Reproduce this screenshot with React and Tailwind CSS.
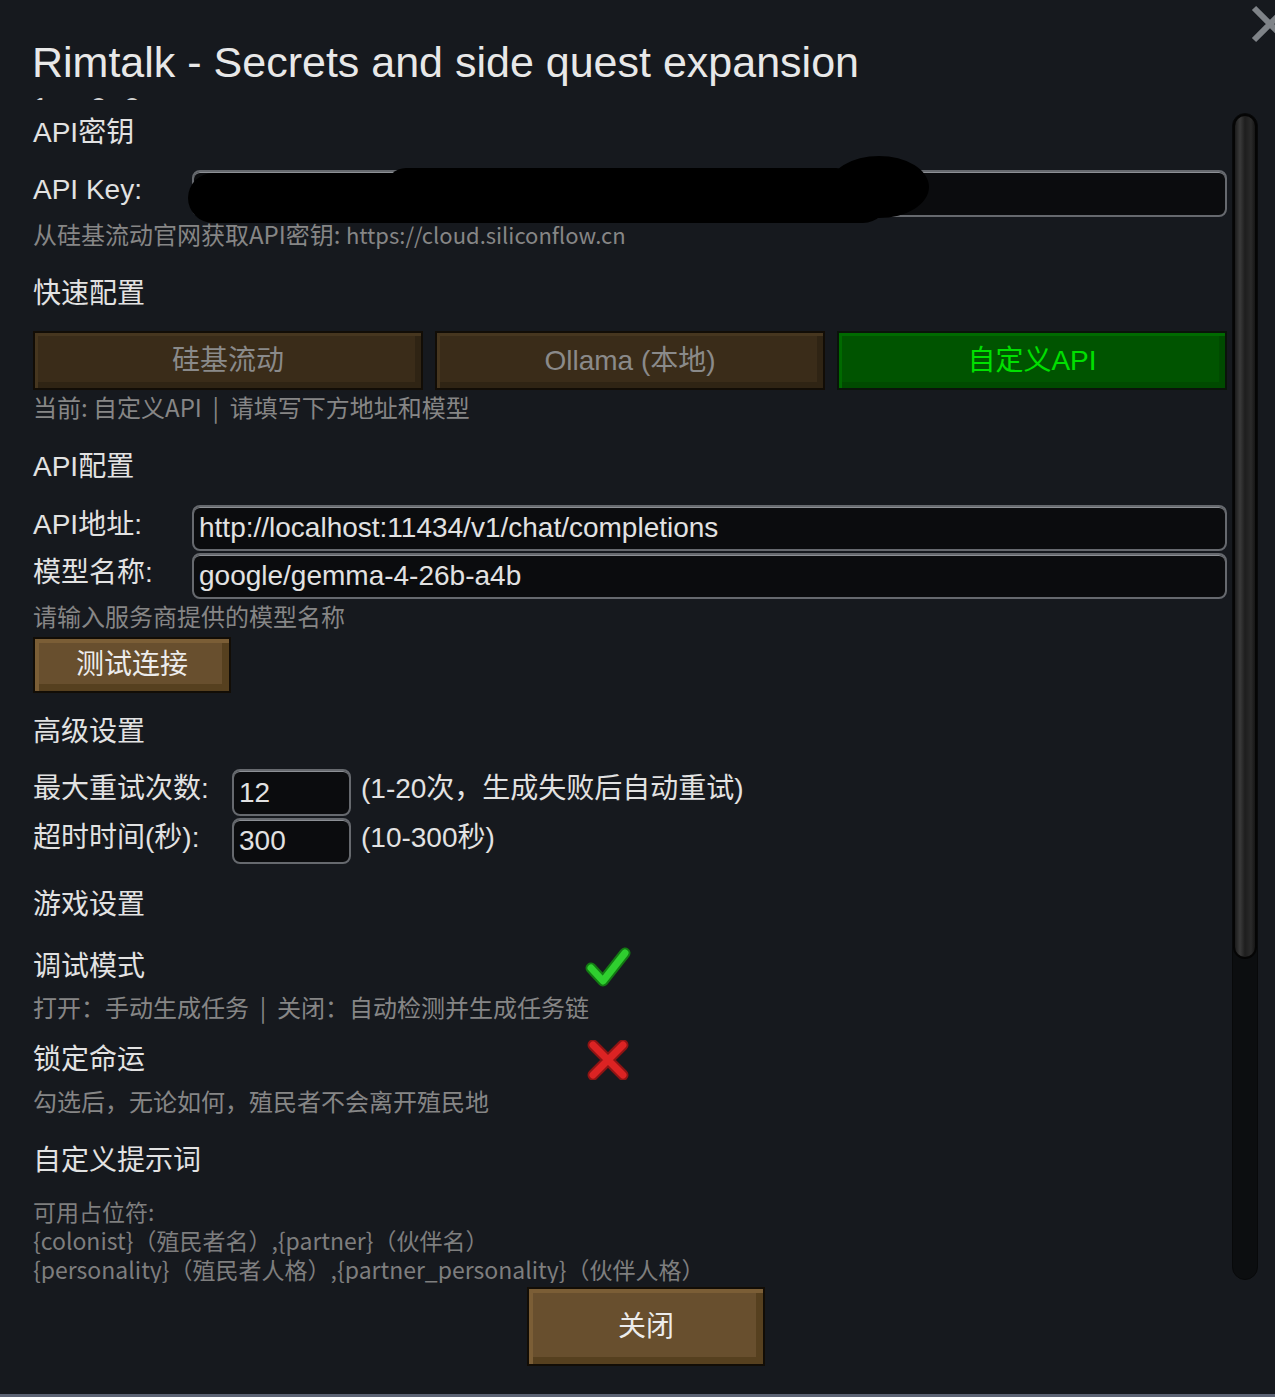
import React from "react";

const sans = "font-['Liberation_Sans','Noto_Sans_CJK_SC',sans-serif]";
const hintFont = "font-['Noto_Sans_CJK_SC','Noto_Sans',sans-serif]";

function Heading({ children, className = "" }) {
  return (
    <div className={`h-[44px] pt-[1px] flex items-center text-[28px] text-[#e2e2e2] ${className}`}>
      {children}
    </div>
  );
}

function Hint({ children, className = "" }) {
  return (
    <div
      className={`h-[30px] flex items-center text-[24px] text-[#868686] whitespace-nowrap ${hintFont} ${className}`}
    >
      {children}
    </div>
  );
}

function FieldLabel({ children, className = "" }) {
  return (
    <div className={`pb-[7px] flex items-center text-[28px] text-[#e2e2e2] whitespace-nowrap ${className}`}>
      {children}
    </div>
  );
}

function Field({ value, className = "" }) {
  return (
    <div
      className={`h-full bg-[#0b0c0e] border-2 border-[#66696e] rounded-[8px] pl-[5px] flex items-center text-[28px] text-[#e2e2e2] shadow-[inset_0_1px_0_#8d9095] ${className}`}
    >
      {value}
    </div>
  );
}

function PresetButton({ children, active }) {
  if (active) {
    return (
      <div className="h-full border-2 border-[#0a140a] bg-[#005400] shadow-[inset_3px_3px_0_#006a00,inset_-6px_-6px_0_#004a00] flex items-center justify-center text-[28px] text-[#00e000]">
        {children}
      </div>
    );
  }
  return (
    <div className="h-full border-2 border-[#120d06] bg-[#3a2c19] shadow-[inset_3px_3px_0_#46361f,inset_-6px_-6px_0_#2f2414] flex items-center justify-center text-[28px] text-[#8a8a8a]">
      {children}
    </div>
  );
}

function BrownButton({ children, className = "" }) {
  return (
    <div
      className={`border-2 border-[#120d06] bg-[#684f2e] shadow-[inset_4px_4px_0_#7b5e36,inset_-7px_-7px_0_#56401f] flex items-center justify-center text-[28px] text-[#ececec] ${className}`}
    >
      {children}
    </div>
  );
}

function Check() {
  return (
    <svg width="46" height="42" viewBox="0 0 46 42">
      <polyline points="6,22 18,35 40,7" fill="none" stroke="#137a13" strokeWidth="11" strokeLinecap="round" strokeLinejoin="round" />
      <polyline points="6,22 18,35 40,7" fill="none" stroke="#2fcf2f" strokeWidth="7" strokeLinecap="round" strokeLinejoin="round" />
    </svg>
  );
}

function Cross() {
  return (
    <svg width="42" height="40" viewBox="0 0 42 40">
      <g fill="none" strokeLinecap="round">
        <path d="M6 5 L36 35 M36 5 L6 35" stroke="#8e1414" strokeWidth="11" />
        <path d="M6 5 L36 35 M36 5 L6 35" stroke="#dc2323" strokeWidth="7" />
      </g>
    </svg>
  );
}

export default function App() {
  return (
    <div className={`relative w-[1275px] h-[1397px] overflow-hidden bg-[#16191e] ${sans} flex flex-col`}>
      {/* close X, cut by the window edge */}
      <svg className="absolute left-[1250px] top-[4px]" width="40" height="40" viewBox="0 0 40 40">
        <path d="M4 4 L36 36 M36 4 L4 36" stroke="#7f8388" strokeWidth="6" fill="none" />
      </svg>

      <div className="h-[100px] overflow-hidden pl-[32px] pt-[38px] shrink-0">
        <div className="h-[48px] flex items-center text-[43px] text-[#e8e8e8] whitespace-nowrap">
          Rimtalk - Secrets and side quest expansion
        </div>
        <div className="mt-[6px] text-[30px] leading-[32px] text-[#cfcfcf] whitespace-pre">{"1     0  0"}</div>
      </div>

      <div className="h-[1183px] overflow-hidden flex shrink-0">
        <div className="w-[1227px] pl-[33px] flex flex-col shrink-0 *:shrink-0">
          <Heading className="mt-[10px]">API密钥</Heading>

          <div className="relative mt-[16px] h-[47px] flex">
            <FieldLabel className="w-[159px]">API Key:</FieldLabel>
            <Field value="" className="flex-1" />
            <svg className="absolute left-[153px] top-[-16px]" width="760" height="75" viewBox="0 0 760 75">
              <rect x="2" y="19" width="700" height="50" rx="25" fill="#000" />
              <rect x="200" y="14" width="470" height="42" rx="20" fill="#000" />
              <ellipse cx="693" cy="33" rx="50" ry="31" fill="#000" />
            </svg>
          </div>

          <Hint className="mt-[2px]">
            从硅基流动官网获取API密钥:&nbsp;<span className="text-[22px]">https://cloud.siliconflow.cn</span>
          </Hint>

          <Heading className="mt-[22px]">快速配置</Heading>

          <div className="mt-[16px] h-[59px] grid grid-cols-3 gap-[12px]">
            <PresetButton>硅基流动</PresetButton>
            <PresetButton>Ollama (本地)</PresetButton>
            <PresetButton active>自定义API</PresetButton>
          </div>

          <Hint className="mt-[2px] whitespace-pre">当前: 自定义API  |  请填写下方地址和模型</Hint>

          <Heading className="mt-[22px]">API配置</Heading>

          <div className="mt-[17px] h-[46px] flex">
            <FieldLabel className="w-[159px]">API地址:</FieldLabel>
            <Field value="http://localhost:11434/v1/chat/completions" className="flex-1" />
          </div>
          <div className="mt-[2px] h-[46px] flex">
            <FieldLabel className="w-[159px]">模型名称:</FieldLabel>
            <Field value="google/gemma-4-26b-a4b" className="flex-1" />
          </div>

          <Hint className="mt-[2px]">请输入服务商提供的模型名称</Hint>

          <BrownButton className="mt-[6px] h-[56px] w-[198px]">测试连接</BrownButton>

          <Heading className="mt-[16px]">高级设置</Heading>

          <div className="mt-[16px] h-[47px] flex">
            <FieldLabel className="w-[199px]">最大重试次数:</FieldLabel>
            <Field value="12" className="w-[119px]" />
            <FieldLabel className="ml-[10px]">(1-20次，生成失败后自动重试)</FieldLabel>
          </div>
          <div className="mt-[2px] h-[46px] flex">
            <FieldLabel className="w-[199px]">超时时间(秒):</FieldLabel>
            <Field value="300" className="w-[119px]" />
            <FieldLabel className="ml-[10px]">(10-300秒)</FieldLabel>
          </div>

          <Heading className="mt-[18px]">游戏设置</Heading>

          <div className="mt-[18px] h-[46px] flex items-center">
            <div className="w-[552px] text-[28px] text-[#e2e2e2]">调试模式</div>
            <Check />
          </div>
          <Hint className="mt-[2px] whitespace-pre">打开：手动生成任务  |  关闭：自动检测并生成任务链</Hint>

          <div className="mt-[15px] h-[46px] flex items-center">
            <div className="w-[554px] text-[28px] text-[#e2e2e2]">锁定命运</div>
            <Cross />
          </div>
          <Hint className="mt-[3px]">勾选后，无论如何，殖民者不会离开殖民地</Hint>

          <Heading className="mt-[22px]">自定义提示词</Heading>

          <div className={`mt-[15px] text-[23px] leading-[29px] text-[#7e7e7e] whitespace-nowrap ${hintFont}`}>
            <div>可用占位符:</div>
            <div>{"{colonist}（殖民者名）,{partner}（伙伴名）"}</div>
            <div>{"{personality}（殖民者人格）,{partner_personality}（伙伴人格）"}</div>
          </div>
        </div>

        {/* scrollbar */}
        <div className="ml-[5px] mt-[13px] w-[26px] h-[1167px] rounded-full bg-[#0c0e10] border border-[#08090a] flex flex-col">
          <div className="h-[845px] rounded-full border-2 border-[#050505] bg-[linear-gradient(90deg,#1c1c1c_0%,#3a3a3a_25%,#1e1e1e_50%,#2a2a2a_80%,#161616_100%)]" />
        </div>
      </div>

      <div className="mt-[4px] pl-[527px] shrink-0">
        <BrownButton className="h-[79px] w-[238px]">关闭</BrownButton>
      </div>

      <div className="mt-auto h-[3px] bg-[#5c6374] shrink-0" />
    </div>
  );
}
